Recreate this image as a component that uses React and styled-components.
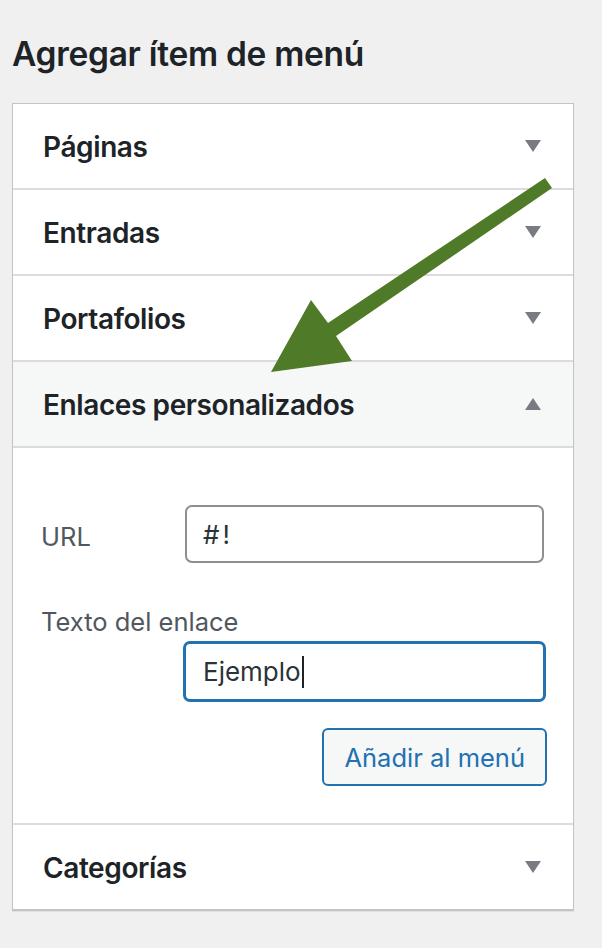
import React from "react";
import styled, { createGlobalStyle } from "styled-components";

const GlobalStyle = createGlobalStyle`
  html, body {
    margin: 0;
    padding: 0;
    background: #f0f0f1;
  }
  body {
    font-family: Inter, "Noto Sans", "Liberation Sans", sans-serif;
    color: #1d2327;
  }
`;

const sections = [
  { title: "Páginas" },
  { title: "Entradas" },
  { title: "Portafolios" },
  { title: "Enlaces personalizados", open: true },
  { title: "Categorías" },
];

const Arrow = () => (
  <ArrowSvg width="602" height="948" viewBox="0 0 602 948">
    <polygon
      points="545,178 552,188 336,336 352,361 271,372 311,300 328,323"
      fill="#4f7a28"
    />
  </ArrowSvg>
);

const Triangle = ({ up }) => (
  <svg width="16" height="12" viewBox="0 0 16 12">
    <polygon points={up ? "8,0 16,12 0,12" : "0,0 16,0 8,12"} fill="#787c82" />
  </svg>
);

const FocusedInput = ({ value }) => (
  <FieldWrap>
    <Input focused defaultValue={value} />
    <CaretMirror>
      {value}
      <Caret />
    </CaretMirror>
  </FieldWrap>
);

const CustomLinks = () => (
  <Body>
    <FieldRow>
      <Label>URL</Label>
      <Input defaultValue="#!" spaced />
    </FieldRow>
    <StackLabel>Texto del enlace</StackLabel>
    <FieldRow>
      <Spacer />
      <FocusedInput value="Ejemplo" />
    </FieldRow>
    <Actions>
      <Button>Añadir al menú</Button>
    </Actions>
  </Body>
);

const App = () => {
  return (
    <Page>
      <GlobalStyle />
      <Title>Agregar ítem de menú</Title>
      <Panel>
        {sections.map((s) => (
          <Section key={s.title}>
            <Header open={s.open}>
              <HeaderText>{s.title}</HeaderText>
              <Triangle up={s.open} />
            </Header>
            {s.open && <CustomLinks />}
          </Section>
        ))}
      </Panel>
      <Arrow />
    </Page>
  );
};

export default App;

const Page = styled.div`
  position: relative;
  width: 602px;
  height: 948px;
  padding: 33px 0 0 12px;
  box-sizing: border-box;
  overflow: hidden;
`;

const Title = styled.h2`
  margin: 0 0 27px;
  font-size: 33.5px;
  font-weight: 600;
  line-height: 43px;
  letter-spacing: -0.3px;
  color: #1d2327;
`;

const Panel = styled.div`
  width: 562px;
  box-sizing: border-box;
  background: #fff;
  border: 1px solid #c3c4c7;
  border-bottom-width: 2px;
  box-shadow: 0 1px 1px rgba(0, 0, 0, 0.06);
`;

const Section = styled.div`
  border-bottom: 2px solid #dcdcde;
  &:last-child {
    border-bottom: none;
  }
`;

const Header = styled.div`
  height: 84px;
  display: flex;
  align-items: center;
  justify-content: space-between;
  padding: 0 32px 0 30px;
  background: ${(p) => (p.open ? "#f6f7f7" : "#fff")};
  border-bottom: ${(p) => (p.open ? "2px solid #dcdcde" : "none")};
`;

const HeaderText = styled.span`
  font-size: 28px;
  font-weight: 600;
  letter-spacing: -0.4px;
  color: #1d2327;
  padding-top: 2px;
`;

const Body = styled.div`
  padding: 57px 27px 37px 28px;
  display: flex;
  flex-direction: column;
`;

const FieldRow = styled.div`
  display: flex;
  align-items: center;
`;

const Label = styled.label`
  width: 144px;
  font-size: 25.5px;
  color: #50575e;
  padding-top: 4px;
`;

const Spacer = styled.div`
  width: 142px;
`;

const StackLabel = styled.label`
  margin: 42px 0 2px;
  font-size: 25.5px;
  line-height: 34px;
  color: #50575e;
`;

const FieldWrap = styled.div`
  position: relative;
`;

const Input = styled.input`
  display: block;
  height: ${(p) => (p.focused ? "61px" : "58px")};
  width: ${(p) => (p.focused ? "363px" : "359px")};
  box-sizing: border-box;
  padding: 0 ${(p) => (p.focused ? "17px" : "16px")};
  font-family: Inter, "Noto Sans", "Liberation Sans", sans-serif;
  font-size: 26px;
  letter-spacing: ${(p) => (p.spaced ? "3px" : "0")};
  color: #2c3338;
  background: #fff;
  border: ${(p) => (p.focused ? "3px solid #2271b1" : "2px solid #8c8f94")};
  border-radius: 7px;
  outline: none;
  caret-color: transparent;
`;

const CaretMirror = styled.span`
  position: absolute;
  left: 20px;
  top: 0;
  height: 61px;
  display: flex;
  align-items: center;
  font-size: 26px;
  color: transparent;
  pointer-events: none;
`;

const Caret = styled.span`
  display: inline-block;
  width: 2px;
  height: 32px;
  margin-left: 1px;
  background: #1d2327;
`;

const Actions = styled.div`
  display: flex;
  justify-content: flex-end;
  margin-top: 26px;
`;

const Button = styled.button`
  height: 58px;
  padding: 0 20px;
  font-family: Inter, "Noto Sans", "Liberation Sans", sans-serif;
  font-size: 25.5px;
  color: #2271b1;
  background: #f6f7f7;
  border: 2px solid #2271b1;
  border-radius: 6px;
  margin-right: -1px;
`;

const ArrowSvg = styled.svg`
  position: absolute;
  top: 0;
  left: 0;
  pointer-events: none;
`;
